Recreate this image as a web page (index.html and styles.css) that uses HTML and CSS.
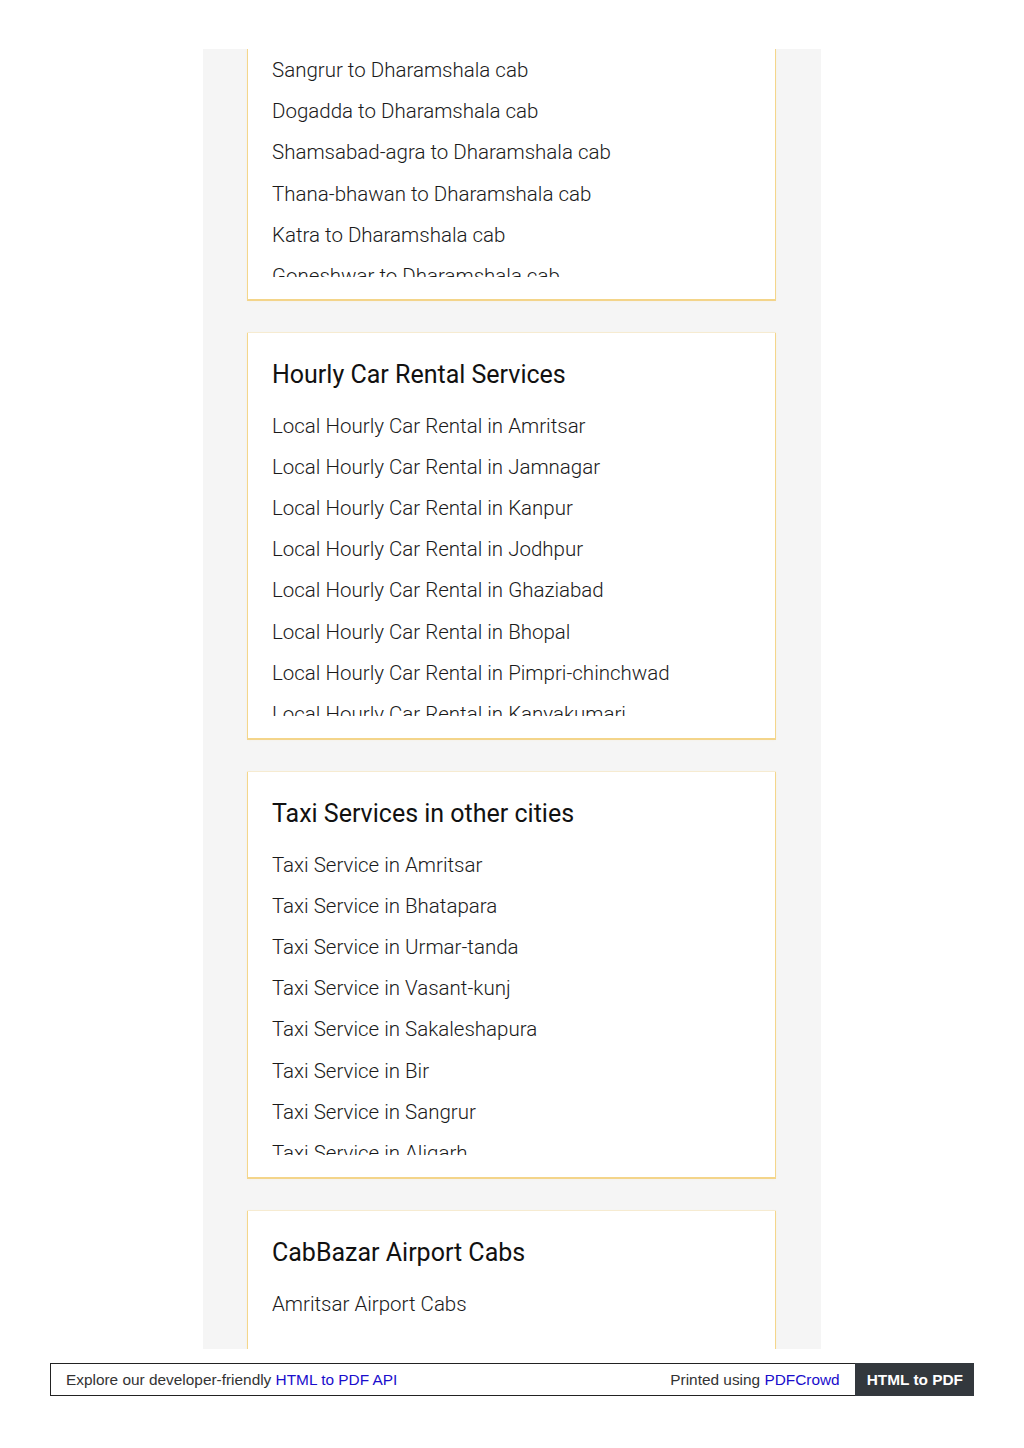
FILE: index.html
```html
<!DOCTYPE html>
<html lang="en">
<head>
<meta charset="utf-8">
<title>CabBazar</title>
<link rel="stylesheet" href="styles.css">
</head>
<body>
<div class="panel">
  <section class="card card-cut">
    <ul class="links links-cut">
      <li>Sangrur to Dharamshala cab</li>
      <li>Dogadda to Dharamshala cab</li>
      <li>Shamsabad-agra to Dharamshala cab</li>
      <li>Thana-bhawan to Dharamshala cab</li>
      <li>Katra to Dharamshala cab</li>
      <li>Goneshwar to Dharamshala cab</li>
      <li>Kangra to Dharamshala cab</li>
    </ul>
  </section>
  <section class="card">
    <h2 class="card-title">Hourly Car Rental Services</h2>
    <ul class="links">
      <li>Local Hourly Car Rental in Amritsar</li>
      <li>Local Hourly Car Rental in Jamnagar</li>
      <li>Local Hourly Car Rental in Kanpur</li>
      <li>Local Hourly Car Rental in Jodhpur</li>
      <li>Local Hourly Car Rental in Ghaziabad</li>
      <li>Local Hourly Car Rental in Bhopal</li>
      <li>Local Hourly Car Rental in Pimpri-chinchwad</li>
      <li>Local Hourly Car Rental in Kanyakumari</li>
      <li>Local Hourly Car Rental in Delhi</li>
    </ul>
  </section>
  <section class="card">
    <h2 class="card-title">Taxi Services in other cities</h2>
    <ul class="links">
      <li>Taxi Service in Amritsar</li>
      <li>Taxi Service in Bhatapara</li>
      <li>Taxi Service in Urmar-tanda</li>
      <li>Taxi Service in Vasant-kunj</li>
      <li>Taxi Service in Sakaleshapura</li>
      <li>Taxi Service in Bir</li>
      <li>Taxi Service in Sangrur</li>
      <li>Taxi Service in Aligarh</li>
      <li>Taxi Service in Delhi</li>
    </ul>
  </section>
  <section class="card">
    <h2 class="card-title">CabBazar Airport Cabs</h2>
    <ul class="links">
      <li>Amritsar Airport Cabs</li>
    </ul>
  </section>
</div>
<footer class="pdf-bar">
  <div class="pdf-left">Explore our developer-friendly <a href="#">HTML to PDF API</a></div>
  <div class="pdf-right">Printed using <a href="#">PDFCrowd</a></div>
  <div class="pdf-badge">HTML to PDF</div>
</footer>
</body>
</html>
```
FILE: styles.css
```css
* { box-sizing: border-box; }
html, body { margin: 0; padding: 0; background: #fff; }
body { font-family: Roboto, "Noto Sans", sans-serif; color: #212121; }

.panel {
  width: 618px;
  height: 1300px;
  margin: 49px auto 0;
  background: #f5f5f5;
  overflow: hidden;
  display: flex;
  flex-direction: column;
  gap: 34px;
  padding: 0 46px 0 45px;
}

.card {
  flex: none;
  background: #fff;
  padding: 24px 24px 22px;
  box-shadow: 0 0 0 1px rgba(250, 220, 140, 0.3), 0 1px 0 1px rgba(242, 200, 100, 0.7), 0 1px 3px rgba(240, 190, 60, 0.2);
}

.card-cut { padding-top: 1px; }

.card-title {
  margin: 0 0 12.5px;
  font-size: 25px;
  line-height: 36px;
  font-weight: 400;
  color: #111;
}

.links {
  list-style: none;
  margin: 0;
  padding: 0;
  height: 310.5px;
  overflow: hidden;
}
.links-cut { height: 227px; }

.links li {
  font-size: 20.5px;
  font-weight: 300;
  line-height: 41.2px;
  color: #1a1a1a;
  white-space: nowrap;
}

.pdf-bar {
  width: 924px;
  height: 33px;
  margin: 14px auto 0;
  border: 1px solid #222;
  display: flex;
  align-items: center;
  font-family: "Liberation Sans", Arial, sans-serif;
  font-size: 15.4px;
  color: #333;
}
.pdf-bar a { color: #1a0dcc; text-decoration: none; }
.pdf-left { padding-left: 15px; flex: 1; }
.pdf-right { padding-right: 15px; }
.pdf-badge {
  align-self: stretch;
  background: #33383d;
  color: #fff;
  font-weight: 700;
  padding: 0 11px 0 12px;
  display: flex;
  align-items: center;
  margin: -1px -1px -1px 0;
}
```
